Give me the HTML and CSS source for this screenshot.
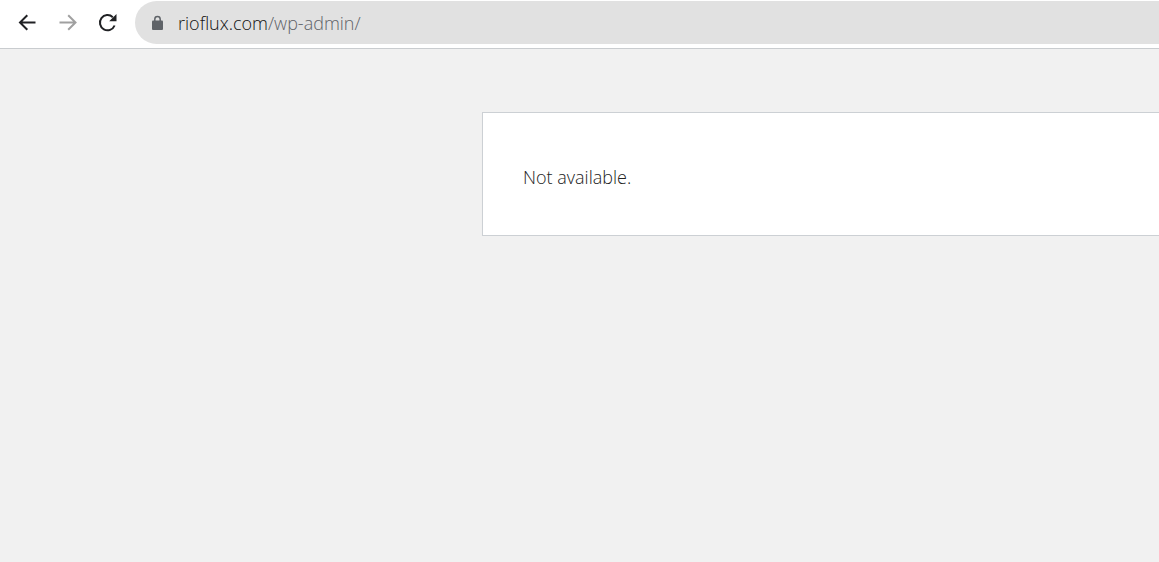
FILE: index.html
```html
<!DOCTYPE html>
<html lang="en">
<head>
  <meta charset="UTF-8">
  <meta name="viewport" content="width=device-width, initial-scale=1.0">
  <title>Not available</title>
  <link rel="stylesheet" href="styles.css">
</head>
<body>
  <header class="toolbar">
    <nav class="nav-buttons">
      <button type="button" aria-label="Back">
        <svg viewBox="0 0 24 24"><path d="M19.5 11.5H4.5M11.3 4.2L4 11.5l7.3 7.3"/></svg>
      </button>
      <button type="button" class="forward" aria-label="Forward" disabled>
        <svg viewBox="0 0 24 24"><path d="M3.5 11.5H19M12.2 4.2l7.3 7.3-7.3 7.3"/></svg>
      </button>
      <button type="button" aria-label="Reload">
        <svg viewBox="0 0 24 24"><path d="M18.6 14.5A7.6 7.6 0 1 1 16.8 6.2"/><path class="tip" d="M20.5 3v7.3h-7.3z"/></svg>
      </button>
    </nav>
    <div class="address-bar">
      <svg class="lock" viewBox="0 0 12 16"><path class="shackle" d="M2.8 7V4.2a2.7 2.7 0 0 1 5.4 0V7"/><rect x="0" y="5.5" width="11" height="9.5" rx="1"/></svg>
      <div class="url" role="textbox" aria-label="Address" contenteditable="true" spellcheck="false">rioflux.com<span class="path">/wp-admin/</span></div>
    </div>
  </header>

  <main class="page">
    <div class="message">
      <p>Not available.</p>
    </div>
  </main>
</body>
</html>
```
FILE: styles.css
```css
* {
  box-sizing: border-box;
}

body {
  margin: 0;
  background: #f1f1f1;
  font-family: "Open Sans", "Noto Sans", sans-serif;
  font-weight: 300;
}

.toolbar {
  display: flex;
  padding: 1px 0 4px 16px;
  background: #fff;
  border-bottom: 1px solid #c9cccf;
}

.nav-buttons {
  display: flex;
  align-items: center;
  gap: 16px;
}

.nav-buttons button {
  display: flex;
  padding: 0;
  border: 0;
  background: none;
  color: #202124;
}

.nav-buttons .forward {
  color: #a0a0a0;
}

.nav-buttons svg {
  width: 24px;
  height: 24px;
  fill: none;
  stroke: currentColor;
  stroke-width: 2;
}

.nav-buttons .tip {
  fill: currentColor;
  stroke: none;
}

.address-bar {
  display: flex;
  flex: 1;
  align-items: center;
  gap: 14px;
  height: 43px;
  margin-left: 15px;
  padding-left: 17px;
  background: #e1e1e1;
  border-radius: 22px 0 0 22px;
}

.lock {
  width: 12px;
  height: 16px;
  fill: #5f6368;
}

.lock .shackle {
  fill: none;
  stroke: #5f6368;
  stroke-width: 1.5;
}

.url {
  flex: 1;
  color: #111;
  font-size: 18px;
  line-height: 24px;
  outline: none;
}

.url .path {
  color: #5f6368;
}

.page {
  padding: 63px 0 0 482px;
}

.message {
  padding: 50px 40px 44px;
  background: #fff;
  border: 1px solid #ccd0d4;
  border-right: 0;
  box-shadow: 0 1px 1px rgba(0, 0, 0, 0.04);
}

.message p {
  margin: 0;
  color: #222;
  font-size: 18px;
  line-height: 28px;
}
```
